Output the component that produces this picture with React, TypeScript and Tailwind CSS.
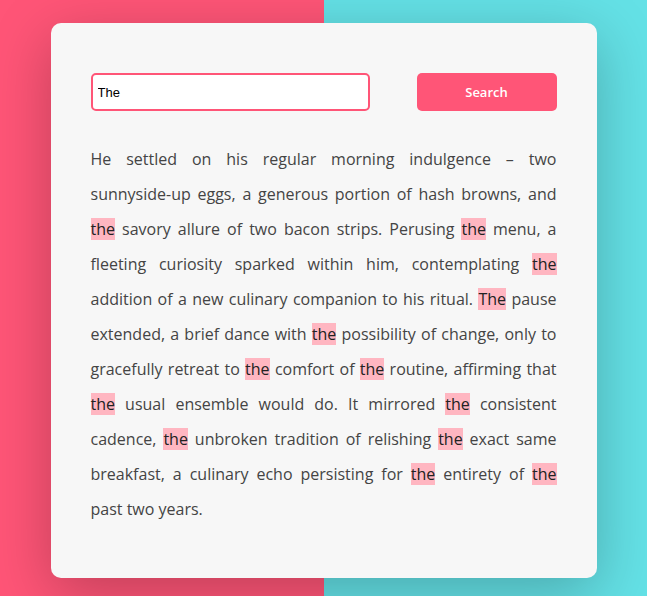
import React, { useState } from 'react';

// lines as they wrap in the card
const storyLines = [
  'He settled on his regular morning indulgence – two',
  'sunnyside-up eggs, a generous portion of hash browns, and',
  'the savory allure of two bacon strips. Perusing the menu, a',
  'fleeting curiosity sparked within him, contemplating the',
  'addition of a new culinary companion to his ritual. The pause',
  'extended, a brief dance with the possibility of change, only to',
  'gracefully retreat to the comfort of the routine, affirming that',
  'the usual ensemble would do. It mirrored the consistent',
  'cadence, the unbroken tradition of relishing the exact same',
  'breakfast, a culinary echo persisting for the entirety of the',
  'past two years.',
];

const Highlighted = ({ text, term }: { text: string; term: string }) => {
  if (!term.trim()) return <>{text}</>;
  const re = new RegExp(`\\b(${term.trim()})\\b`, 'gi');
  const parts = text.split(re);
  return (
    <>
      {parts.map((p, i) =>
        i % 2 === 1 ? (
          <mark key={i} className="bg-[#ffb6c1] text-[#222]">
            {p}
          </mark>
        ) : (
          <React.Fragment key={i}>{p}</React.Fragment>
        )
      )}
    </>
  );
};

export default function App() {
  const [term, setTerm] = useState('The');

  return (
    <div
      className="min-h-screen bg-[linear-gradient(to_right,#ff5577_50%,#64e1e6_50%)] pt-[23px] pb-[19px]"
      style={{ fontFamily: '"Open Sans", "Liberation Sans", sans-serif' }}
    >
      <div className="mx-auto w-[546px] rounded-[10px] bg-[#f7f7f7] px-10 pt-[50px] pb-[51px] shadow-[0_15px_60px_rgba(0,0,0,0.25)]">
        <div className="flex items-center justify-between">
          <input
            value={term}
            onChange={(e) => setTerm(e.target.value)}
            className="h-[38px] w-[279px] rounded-[5px] border-2 border-[#ff5577] bg-white px-[5px] text-[13px] text-black outline-none"
            style={{ fontFamily: '"Liberation Sans", Arial, sans-serif' }}
          />
          <button className="h-[38px] w-[140px] rounded-[5px] bg-[#ff5577] pt-[2px] text-[13px] font-semibold text-white">
            Search
          </button>
        </div>
        <div className="mt-[31px] text-[16px] leading-[35px] text-[#444]">
          {storyLines.map((line, i) => (
            <div
              key={i}
              className={
                i < storyLines.length - 1
                  ? 'whitespace-nowrap text-justify [text-align-last:justify]'
                  : 'whitespace-nowrap'
              }
            >
              <Highlighted text={line} term={term} />
            </div>
          ))}
        </div>
      </div>
    </div>
  );
}
